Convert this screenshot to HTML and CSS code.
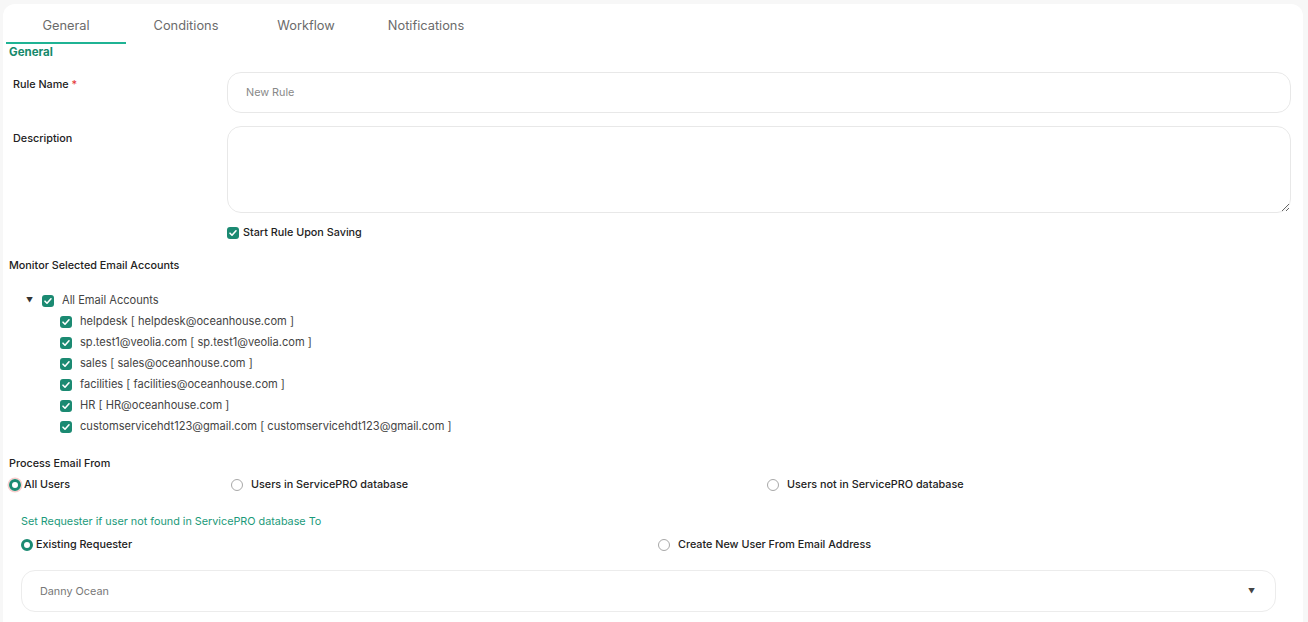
FILE: index.html
```html
<!DOCTYPE html>
<html lang="en">
<head>
    <meta charset="UTF-8">
    <title>Email Rule</title>
    <link rel="stylesheet" href="styles.css">
</head>
<body>
    <div class="card">
        <div class="tabs">
            <div class="tab active">General</div>
            <div class="tab">Conditions</div>
            <div class="tab">Workflow</div>
            <div class="tab">Notifications</div>
        </div>

        <div class="section-title">General</div>

        <div class="form-row">
            <label class="field-label">Rule Name <span class="req">*</span></label>
            <input class="text-input" type="text" placeholder="New Rule">
        </div>
        <div class="form-row">
            <label class="field-label">Description</label>
            <textarea class="text-area"></textarea>
        </div>
        <div class="form-row check-row">
            <span></span>
            <div class="check-line">
                <span class="box"><svg viewBox="0 0 12 12"><path d="M3 6.2l2 2 4-4.4" fill="none" stroke="#fff" stroke-width="1.6" stroke-linecap="round" stroke-linejoin="round"/></svg></span>
                <span>Start Rule Upon Saving</span>
            </div>
        </div>

        <div class="group-label monitor">Monitor Selected Email Accounts</div>

        <div class="tree">
            <div class="tree-root">
                <span class="caret">&#9660;</span>
                <span class="box"><svg viewBox="0 0 12 12"><path d="M3 6.2l2 2 4-4.4" fill="none" stroke="#fff" stroke-width="1.6" stroke-linecap="round" stroke-linejoin="round"/></svg></span>
                <span>All Email Accounts</span>
            </div>
            <div class="tree-children" id="accounts"></div>
        </div>

        <div class="group-label process">Process Email From</div>
        <div class="radio-row first">
            <div class="radio-opt"><span class="radio checked focus"></span>All Users</div>
            <div class="radio-opt"><span class="radio"></span><span class="gap">Users in ServicePRO database</span></div>
            <div class="radio-opt"><span class="radio"></span><span class="gap">Users not in ServicePRO database</span></div>
        </div>

        <div class="sub-title">Set Requester if user not found in ServicePRO database To</div>
        <div class="radio-row second">
            <div class="radio-opt"><span class="radio checked"></span>Existing Requester</div>
            <div class="radio-opt"><span class="radio"></span><span class="gap">Create New User From Email Address</span></div>
        </div>

        <div class="select-box">
            <span>Danny Ocean</span>
            <span class="select-caret">&#9660;</span>
        </div>
    </div>

    <script>
        const accounts = [
            'helpdesk [ helpdesk@oceanhouse.com ]',
            'sp.test1@veolia.com [ sp.test1@veolia.com ]',
            'sales [ sales@oceanhouse.com ]',
            'facilities [ facilities@oceanhouse.com ]',
            'HR [ HR@oceanhouse.com ]',
            'customservicehdt123@gmail.com [ customservicehdt123@gmail.com ]'
        ];
        const tick = '<svg viewBox="0 0 12 12"><path d="M3 6.2l2 2 4-4.4" fill="none" stroke="#fff" stroke-width="1.6" stroke-linecap="round" stroke-linejoin="round"/></svg>';
        document.getElementById('accounts').innerHTML = accounts.map(a => `
            <div class="tree-item"><span class="box">${tick}</span><span>${a}</span></div>
        `).join('');
    </script>
</body>
</html>
```

FILE: styles.css
```css
body {
    margin: 0;
    background: #f7f7f7;
    font-family: 'Inter', 'Noto Sans', sans-serif;
    color: #222;
}

.card {
    background: #fff;
    margin: 4px 5px 0 3px;
    border-radius: 12px 12px 0 0;
    height: 618px;
    overflow: hidden;
    padding-right: 12px;
}

.tabs {
    display: flex;
    padding-left: 3px;
}

.tab {
    width: 120px;
    text-align: center;
    font-size: 12.8px;
    color: #6b6b6b;
    padding: 14px 0 8px;
    line-height: 16px;
    border-bottom: 2px solid transparent;
}

.tab.active {
    border-bottom-color: #1fb394;
}

.section-title {
    color: #168a6c;
    font-weight: 700;
    font-size: 11.5px;
    line-height: 14px;
    margin: 1px 0 0 6px;
}

.form-row {
    display: grid;
    grid-template-columns: 224px 1fr;
    margin-top: 13px;
}

.field-label {
    font-size: 10.8px;
    font-weight: 500;
    padding: 6px 0 0 10px;
    line-height: 13px;
}

.req {
    color: #e53935;
}

.text-input,
.text-area {
    box-sizing: border-box;
    border: 1px solid #e8e8e8;
    border-radius: 14px;
    font-family: inherit;
    font-size: 10.8px;
    color: #333;
    outline: none;
    margin: 0;
}

.text-input {
    height: 41px;
    padding: 0 18px;
}

.text-input::placeholder {
    color: #888;
}

.text-area {
    display: block;
    height: 87px;
    resize: vertical;
}

.check-row {
    margin-top: 13px;
}

.check-line {
    display: flex;
    align-items: center;
    gap: 4px;
    font-size: 10.8px;
    font-weight: 500;
    line-height: 13px;
}

.box {
    width: 12px;
    height: 12px;
    border-radius: 3px;
    background: #1b8a72;
    display: inline-flex;
    flex-shrink: 0;
}

.box svg {
    width: 12px;
    height: 12px;
}

.group-label {
    font-size: 10.8px;
    font-weight: 500;
    line-height: 13px;
    margin-left: 6px;
}

.monitor {
    margin-top: 20px;
}

.tree {
    margin-top: 22px;
    font-size: 11.1px;
    color: #444;
    line-height: 13px;
}

.tree-root,
.tree-item {
    display: flex;
    align-items: center;
    height: 13px;
}

.caret {
    font-size: 7px;
    color: #333;
    width: 16px;
    margin-left: 23px;
}

.tree-root .box {
    margin-right: 8px;
}

.tree-children {
    padding-left: 57px;
}

.tree-item {
    margin-top: 8px;
}

.tree-item .box {
    margin-right: 8px;
}

.process {
    margin-top: 24px;
}

.radio-row {
    display: grid;
    font-size: 10.8px;
    font-weight: 500;
    line-height: 13px;
    margin-top: 8px;
}

.radio-row.first {
    grid-template-columns: 222px 536px auto;
    padding-left: 6px;
}

.radio-row.second {
    grid-template-columns: 637px auto;
    padding-left: 18px;
    margin-top: 10px;
}

.radio-opt {
    display: flex;
    align-items: center;
}

.radio {
    box-sizing: border-box;
    width: 12px;
    height: 12px;
    border-radius: 50%;
    border: 1px solid #a8a8a8;
    margin-right: 3px;
    flex-shrink: 0;
}

.radio.checked {
    border: 3.5px solid #1b8a72;
}

.radio.focus {
    box-shadow: 0 0 0 1.5px rgba(229, 57, 53, 0.25);
}

.gap {
    margin-left: 5px;
}

.sub-title {
    color: #1b9a7a;
    font-size: 10.8px;
    line-height: 13px;
    margin: 24px 0 0 18px;
}

.select-box {
    box-sizing: border-box;
    height: 42px;
    margin: 19px 15px 0 18px;
    border: 1px solid #ececec;
    border-radius: 14px;
    display: flex;
    align-items: center;
    justify-content: space-between;
    padding: 0 20px 0 18px;
    font-size: 10.8px;
    color: #777;
}

.select-caret {
    font-size: 7px;
    color: #444;
}
```
